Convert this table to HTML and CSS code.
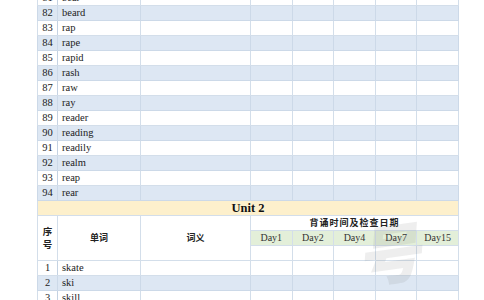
FILE: index.html
```html
<!DOCTYPE html>
<html lang="en">
<head>
<meta charset="utf-8">
<link rel="stylesheet" href="styles.css">
</head>
<body>
<div class="page">
<table class="sheet">
<colgroup>
<col class="c-no"><col class="c-word"><col class="c-mean">
<col class="c-day"><col class="c-day"><col class="c-day"><col class="c-day"><col class="c-day">
</colgroup>
<tbody>
<tr class="odd"><td class="no">81</td><td class="word">bear</td><td></td><td></td><td></td><td></td><td></td><td></td></tr>
<tr class="even"><td class="no">82</td><td class="word">beard</td><td></td><td></td><td></td><td></td><td></td><td></td></tr>
<tr class="odd"><td class="no">83</td><td class="word">rap</td><td></td><td></td><td></td><td></td><td></td><td></td></tr>
<tr class="even"><td class="no">84</td><td class="word">rape</td><td></td><td></td><td></td><td></td><td></td><td></td></tr>
<tr class="odd"><td class="no">85</td><td class="word">rapid</td><td></td><td></td><td></td><td></td><td></td><td></td></tr>
<tr class="even"><td class="no">86</td><td class="word">rash</td><td></td><td></td><td></td><td></td><td></td><td></td></tr>
<tr class="odd"><td class="no">87</td><td class="word">raw</td><td></td><td></td><td></td><td></td><td></td><td></td></tr>
<tr class="even"><td class="no">88</td><td class="word">ray</td><td></td><td></td><td></td><td></td><td></td><td></td></tr>
<tr class="odd"><td class="no">89</td><td class="word">reader</td><td></td><td></td><td></td><td></td><td></td><td></td></tr>
<tr class="even"><td class="no">90</td><td class="word">reading</td><td></td><td></td><td></td><td></td><td></td><td></td></tr>
<tr class="odd"><td class="no">91</td><td class="word">readily</td><td></td><td></td><td></td><td></td><td></td><td></td></tr>
<tr class="even"><td class="no">92</td><td class="word">realm</td><td></td><td></td><td></td><td></td><td></td><td></td></tr>
<tr class="odd"><td class="no">93</td><td class="word">reap</td><td></td><td></td><td></td><td></td><td></td><td></td></tr>
<tr class="even"><td class="no">94</td><td class="word">rear</td><td></td><td></td><td></td><td></td><td></td><td></td></tr>
<tr class="unit"><td colspan="8">Unit 2</td></tr>
<tr class="head">
<td class="hd vert" rowspan="3">序<br>号</td>
<td class="hd" rowspan="3">单词</td>
<td class="hd" rowspan="3">词义</td>
<td class="hd wide" colspan="5">背诵时间及检查日期</td>
</tr>
<tr class="days"><td>Day1</td><td>Day2</td><td>Day4</td><td>Day7</td><td>Day15</td></tr>
<tr class="blank"><td></td><td></td><td></td><td></td><td></td></tr>
<tr class="odd"><td class="no">1</td><td class="word">skate</td><td></td><td></td><td></td><td></td><td></td><td></td></tr>
<tr class="even"><td class="no">2</td><td class="word">ski</td><td></td><td></td><td></td><td></td><td></td><td></td></tr>
<tr class="odd"><td class="no">3</td><td class="word">skill</td><td></td><td></td><td></td><td></td><td></td><td></td></tr>
</tbody>
</table>
<div class="mark">号</div>
</div>
</body>
</html>
```
FILE: styles.css
```css
html, body {
  margin: 0;
  padding: 0;
  background: #ffffff;
}
body {
  width: 484px;
  height: 300px;
  overflow: hidden;
  font-family: "Liberation Serif", "DejaVu Serif", serif;
  color: #222;
}
.page {
  position: relative;
  padding-left: 37px;
  margin-top: -10px;
}
.sheet {
  border-collapse: collapse;
  table-layout: fixed;
  width: 421px;
  font-family: "Liberation Serif", "DejaVu Serif", serif;
  font-size: 10.5px;
}
.c-no { width: 20px; }
.c-word { width: 83px; }
.c-mean { width: 110px; }
.c-day { width: 41.6px; }
.sheet td {
  border: 1px solid #d3deea;
  height: 14px;
  padding: 0;
  line-height: 14px;
  white-space: nowrap;
  overflow: hidden;
}
.sheet tr.even td { background: #dde7f3; border-color: #ccd9e8; }
.sheet tr.odd td { background: #ffffff; }
.sheet td.no { text-align: center; border-right-color: #c4d2e2; }
.sheet td.word { padding-left: 4px; }
.sheet tr.unit td {
  background: #fdf0cc;
  text-align: center;
  font-weight: bold;
  font-size: 12.5px;
  color: #111;
}
.sheet td.hd {
  background: #fff;
  text-align: center;
  font-family: "Noto Sans CJK SC", sans-serif;
  font-weight: bold;
  font-size: 9px;
  color: #222;
}
.sheet td.wide {
  letter-spacing: 1px;
}
.sheet td.vert {
  line-height: 13px;
  font-size: 9.5px;
}
.sheet tr.days td {
  background: #e3efd9;
  text-align: center;
  font-size: 10px;
  color: #333;
}
.sheet tr.blank td { background: #fff; }
.mark {
  position: absolute;
  left: 362px;
  top: 228px;
  font-family: "Noto Sans CJK SC", sans-serif;
  font-weight: 900;
  font-size: 64px;
  line-height: 1;
  color: rgba(120, 120, 120, 0.13);
  transform: rotate(-8deg) skewX(-12deg);
  pointer-events: none;
}
```
